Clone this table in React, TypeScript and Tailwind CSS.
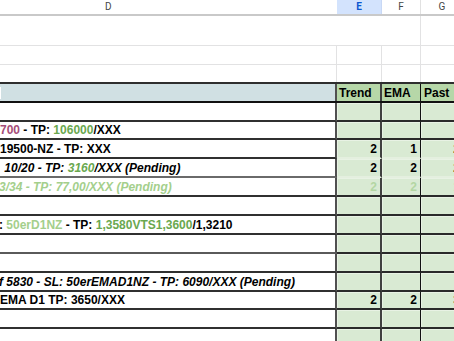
import React from "react";

type Seg = { t: string; c?: string };
type Row = {
  h: string;
  segs?: Seg[];
  italic?: boolean;
  pad?: string;
  vals?: string[];
  valColor?: string;
  gLine?: string;
  dLine?: string;
};

const BLK = "text-[#000000]";
const GRN = "text-[#6aa84f]";
const LGT = "text-[#a4cf8c]";
const PUR = "text-[#a64d79]";

const rows: Row[] = [
  { h: "h-[19px]" },
  {
    h: "h-[18px]",
    segs: [
      { t: "700", c: PUR },
      { t: " - TP: " },
      { t: "106000", c: GRN },
      { t: "/XXX" },
    ],
  },
  {
    h: "h-[19px]",
    segs: [{ t: "19500-NZ - TP: XXX" }],
    vals: ["2", "1", "2"],
    gLine: "border-b-[#e4efdf]",
  },
  {
    h: "h-[19px]",
    italic: true,
    pad: "pl-[1px]",
    segs: [{ t: " 10/20 - TP: " }, { t: "3160", c: GRN }, { t: "/XXX (Pending)" }],
    vals: ["2", "2", "2"],
    gLine: "border-b-[#e4efdf]",
    dLine: "border-b-[#6a6a6a]",
  },
  {
    h: "h-[19px]",
    italic: true,
    pad: "-ml-[1px]",
    segs: [{ t: "3/34 - TP: 77,00/XXX (Pending)", c: LGT }],
    vals: ["2", "2", "1"],
    valColor: "text-[#b3d6a3]",
  },
  { h: "h-[19px]" },
  {
    h: "h-[19px]",
    pad: "-ml-[1px]",
    segs: [
      { t: ": " },
      { t: "50erD1NZ", c: LGT },
      { t: " - TP: " },
      { t: "1,3580VTS1,3600", c: GRN },
      { t: "/1,3210" },
    ],
  },
  { h: "h-[19px]", dLine: "border-b-[#5a5a5a]" },
  { h: "h-[19px]" },
  {
    h: "h-[19px]",
    italic: true,
    pad: "-ml-[1px]",
    segs: [{ t: "f 5830 - SL: 50erEMAD1NZ - TP: 6090/XXX (Pending)" }],
  },
  {
    h: "h-[18px]",
    segs: [{ t: "EMA D1 TP: 3650/XXX" }],
    vals: ["2", "2", "3"],
  },
  { h: "h-[19px]" },
  { h: "h-[19px]" },
];

function DataRow({ r }: { r: Row }) {
  const dl = r.dLine ?? "border-b-[#303030]";
  const gl = r.gLine ?? "border-b-[#2a2a2a]";
  const vc = r.valColor ?? "text-[#000000]";
  const cellG =
    "bg-[#d9ead3] border-b-2 flex items-center justify-end pr-[3px] shadow-[inset_1px_1px_0_#e8f2e4] " + gl + " " + vc;
  return (
    <div className={"flex " + r.h}>
      <div
        className={
          "w-[337px] shrink-0 border-b-2 border-r-2 border-r-[#505050] bg-white flex items-center overflow-hidden " + dl
        }
      >
        {r.segs && (
          <div
            className={
              "whitespace-pre leading-[14px] text-[12px] font-bold " +
              (r.italic ? "italic " : "") +
              (r.pad ?? "")
            }
          >
            {r.segs.map((s, i) => (
              <span key={i} className={s.c ?? BLK}>
                {s.t}
              </span>
            ))}
          </div>
        )}
      </div>
      <div className={"w-[45px] shrink-0 border-r-2 border-r-[#404040] " + cellG}>
        <span className="text-[12px] font-bold leading-[14px]">{r.vals?.[0] ?? ""}</span>
      </div>
      <div className={"w-[39px] shrink-0 border-r border-r-[#111111] " + cellG}>
        <span className="text-[12px] font-bold leading-[14px]">{r.vals?.[1] ?? ""}</span>
      </div>
      <div className={"w-[42px] shrink-0 " + cellG}>
        <span className="text-[12px] font-bold leading-[14px]">{r.vals?.[2] ?? ""}</span>
      </div>
    </div>
  );
}

export default function App() {
  return (
    <div className="w-[454px] h-[341px] overflow-hidden bg-white font-['Liberation_Sans',Arial,sans-serif]">
      {/* Column letters */}
      <div className="flex h-[16px] border-b-2 border-b-[#c9c9c9] font-['Roboto','Liberation_Sans',sans-serif] text-[10px] leading-[14px] text-[#444746]">
        <div className="w-[337px] shrink-0 pl-[105px]">D</div>
        <div className="w-[45px] shrink-0 bg-[#d3e3fd] text-[#0b57d0] font-bold text-center border-r border-r-[#c8d8f5]">E</div>
        <div className="w-[39px] shrink-0 text-center border-r border-r-[#e1e1e1]">F</div>
        <div className="w-[42px] shrink-0 text-center">G</div>
      </div>
      {/* Row A (merged D-F) */}
      <div className="flex h-[30px] border-b border-b-[#e2e2e3]">
        <div className="w-[421px] shrink-0 border-r border-r-[#e2e2e3]" />
        <div className="w-[42px] shrink-0" />
      </div>
      {/* Row B */}
      <div className="flex h-[19px] border-b border-b-[#e2e2e3]">
        <div className="w-[337px] shrink-0 border-r border-r-[#e2e2e3]" />
        <div className="w-[45px] shrink-0 border-r border-r-[#e2e2e3]" />
        <div className="w-[39px] shrink-0 border-r border-r-[#e2e2e3]" />
        <div className="w-[42px] shrink-0" />
      </div>
      {/* Row C */}
      <div className="flex h-[19px] border-b-2 border-b-[#2e2e2e]">
        <div className="w-[337px] shrink-0 border-r border-r-[#e2e2e3]" />
        <div className="w-[45px] shrink-0 border-r border-r-[#e2e2e3]" />
        <div className="w-[39px] shrink-0 border-r border-r-[#e2e2e3]" />
        <div className="w-[42px] shrink-0" />
      </div>
      {/* Table header */}
      <div className="flex h-[19px] border-b-2 border-b-[#111111] text-[12px] font-bold leading-[14px] text-black">
        <div className="w-[337px] shrink-0 bg-[#d0e0e3] border-r-2 border-r-[#505050] flex items-center">
          <div className="w-[1px] h-[12px] bg-white" />
        </div>
        <div className="w-[45px] shrink-0 bg-[#b6d7a8] border-r-2 border-r-[#404040] flex items-center pl-[2px]">Trend</div>
        <div className="w-[39px] shrink-0 bg-[#b6d7a8] border-r border-r-[#111111] flex items-center pl-[2px]">EMA</div>
        <div className="w-[42px] shrink-0 bg-[#b6d7a8] flex items-center pl-[3px]">Past</div>
      </div>
      {rows.map((r, i) => (
        <DataRow key={i} r={r} />
      ))}
    </div>
  );
}
